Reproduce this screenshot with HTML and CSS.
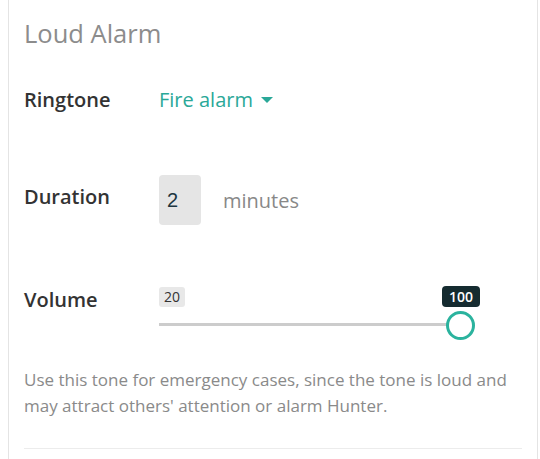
FILE: index.html
```html
<!DOCTYPE html>
<html>
<head>
<meta charset="utf-8">
<link rel="stylesheet" href="styles.css">
</head>
<body>
<div class="panel">
  <h2 class="title">Loud Alarm</h2>
  <div class="row row-ringtone">
    <div class="label">Ringtone</div>
    <div class="select">Fire alarm <span class="caret"></span></div>
  </div>
  <div class="row row-duration">
    <div class="label">Duration</div>
    <div class="input">2</div>
    <div class="unit">minutes</div>
  </div>
  <div class="row row-volume">
    <div class="label">Volume</div>
    <div class="slider">
      <div class="badges">
        <span class="badge badge-min">20</span>
        <span class="badge badge-max">100</span>
      </div>
      <div class="track-wrap">
        <div class="track"></div>
        <div class="knob"></div>
      </div>
    </div>
  </div>
  <p class="desc">Use this tone for emergency cases, since the tone is loud and may attract others' attention or alarm Hunter.</p>
  <div class="divider"></div>
</div>
</body>
</html>
```
FILE: styles.css
```css
html, body {
  margin: 0;
  padding: 0;
  background: #fff;
}
body {
  font-family: "Open Sans", sans-serif;
}
.panel {
  margin-left: 8px;
  width: 498px;
  padding: 0 15px;
  border-left: 1px solid #e4e4e4;
  border-right: 1px solid #e4e4e4;
  height: 459px;
}
.title {
  margin: 0;
  padding-top: 17px;
  font-size: 25.5px;
  line-height: 32px;
  font-weight: 400;
  color: #8c8c8c;
}
.row {
  display: flex;
  align-items: center;
}
.label {
  width: 135px;
  flex: none;
  font-size: 20px;
  font-weight: 600;
  color: #333;
}
.row-ringtone {
  height: 40px;
  margin-top: 30px;
}
.select {
  font-size: 20px;
  color: #2aa898;
  display: flex;
  align-items: center;
}
.caret {
  display: inline-block;
  width: 0;
  height: 0;
  margin-left: 8px;
  margin-top: 2px;
  border-left: 6px solid transparent;
  border-right: 6px solid transparent;
  border-top: 6px solid #2aa898;
}
.row-duration {
  margin-top: 56px;
  height: 50px;
}
.row-duration .label {
  padding-bottom: 8px;
}
.input {
  width: 42px;
  height: 50px;
  box-sizing: border-box;
  padding-left: 8px;
  background: #e5e5e5;
  border-radius: 4px;
  font-family: "Liberation Sans", Arial, sans-serif;
  font-size: 20px;
  color: #1d3641;
  display: flex;
  align-items: center;
}
.unit {
  margin-left: 22px;
  font-size: 20px;
  color: #888;
}
.row-volume {
  margin-top: 61px;
  align-items: flex-start;
}
.slider {
  width: 316px;
  position: relative;
}
.badges {
  display: flex;
  justify-content: space-between;
  height: 21px;
}
.badge {
  font-size: 14px;
  line-height: 21px;
  border-radius: 3px;
}
.badge-min {
  background: #e8e8e8;
  color: #333;
  padding: 0 5px;
  height: 20px;
  line-height: 20px;
  margin-top: 1px;
}
.badge-max {
  background: #152b30;
  color: #fff;
  font-weight: 600;
  padding: 0 7px;
  border-radius: 4px;
  position: relative;
  left: 5px;
}
.track-wrap {
  position: relative;
  height: 36px;
}
.track {
  position: absolute;
  left: 0;
  right: 16px;
  top: 16px;
  height: 3px;
  background: #cccccc;
}
.knob {
  position: absolute;
  left: 287px;
  top: 4px;
  width: 23px;
  height: 23px;
  border: 3px solid #2bb39e;
  border-radius: 50%;
  background: #fff;
}
.desc {
  margin: 24px 0 0;
  font-size: 17px;
  line-height: 26px;
  color: #8a8a8a;
}
.divider {
  margin-top: 29px;
  height: 1px;
  background: #ececec;
}
```
